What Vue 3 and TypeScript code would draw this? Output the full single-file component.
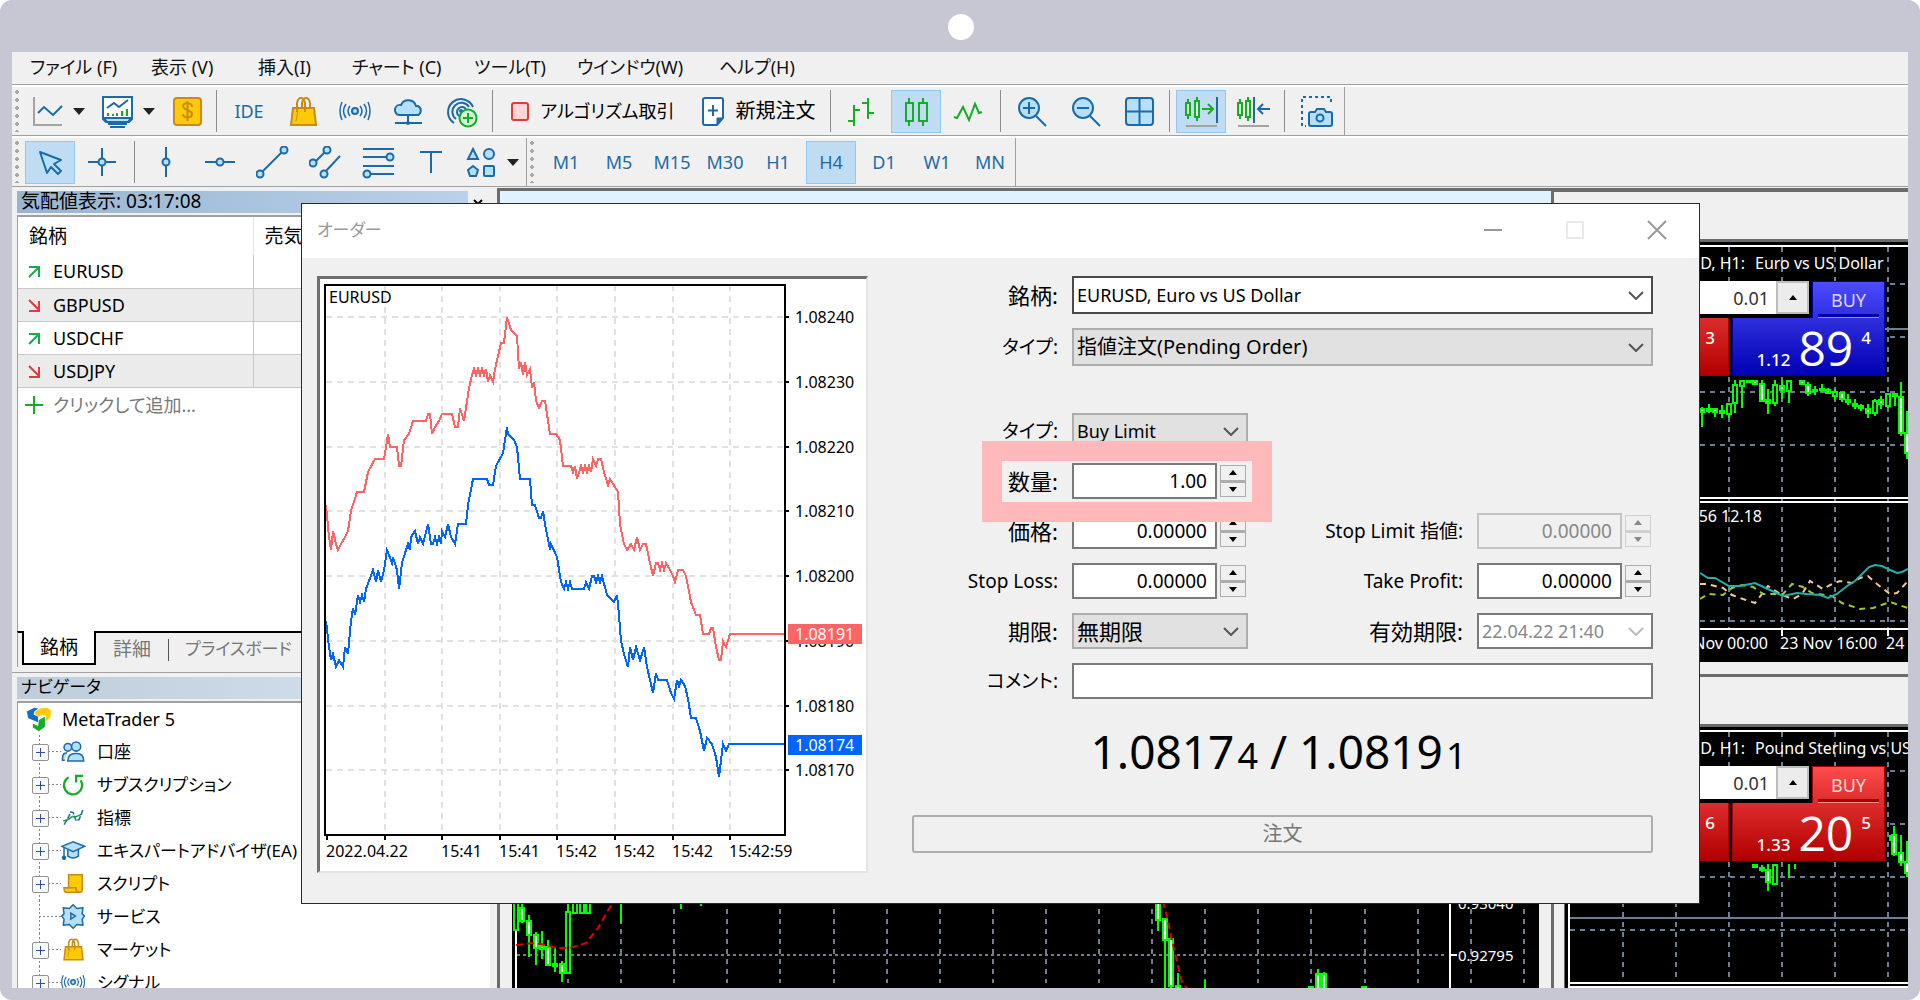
<script setup lang="ts">
import { computed, ref } from 'vue'

type Point = [number, number]
/** x, high, body top, body bottom, low, filled body (1) or hollow (0) */
type Candle = [number, number, number, number, number, number]

interface Tool {
  id: string
  label: string
  icon?: string
  text?: string
  width: number
  iconWidth?: number
  menu?: boolean
  active?: boolean
  sep?: boolean
}

const menus = [
  { label: 'ファイル (F)', width: 121 },
  { label: '表示 (V)', width: 107 },
  { label: '挿入(I)', width: 94 },
  { label: 'チャート (C)', width: 122 },
  { label: 'ツール(T)', width: 103 },
  { label: 'ウインドウ(W)', width: 142 },
  { label: 'ヘルプ(H)', width: 120 },
]

const icons: Record<string, string> = {
  line: '<path d="M3 2V30H31" fill="none" stroke="#a3a3a3" stroke-width="2"/><path d="M7 18l6-6 9 8 9-9" fill="none" stroke="#1c6ba8" stroke-width="2"/>',
  monitor: '<path d="M2 2h29v22l-3 3H5l-3-3z" fill="#fff" stroke="#1c6ba8" stroke-width="2"/><path d="M3 23h27l-3 4H6z" fill="#b5e0fb" stroke="#1c6ba8" stroke-width="2"/><path d="M7 29h19M9 32h15" stroke="#1c6ba8" stroke-width="2"/><path d="M6 13l7-5 5 4 9-7" fill="none" stroke="#1c6ba8" stroke-width="2"/><path d="M7 21v-3M12 21v-2M16 21v-3M21 21v-5M26 21v-7" stroke="#14ad25" stroke-width="2"/>',
  dollar: '<rect x="3" y="3" width="27" height="27" rx="3" fill="#fdca05" stroke="#c98a16" stroke-width="2"/><path d="M21 12c0-5-9-5-9-1s9 4 9 8-9 5-9 0M16.500 6v20" fill="none" stroke="#c98a16" stroke-width="2"/>',
  bag: '<path d="M6 13h21l2 17H4z" fill="#fdca05" stroke="#c98a16" stroke-width="2"/><path d="M10 17V8q1-5 4-5t4 5v9M15 12V8q1-5 4-5t4 5v5" fill="none" stroke="#c98a16" stroke-width="2"/><path d="M9 26l2-10" stroke="#c98a16" stroke-width="1"/>',
  signal: '<circle cx="16" cy="16" r="3" fill="#b5e0fb" stroke="#1c6ba8" stroke-width="2"/><path d="M11 11q-4 5 0 10M7 9q-5 7 0 14M21 11q4 5 0 10M25 9q5 7 0 14M3 7q-4 9 0 18M29 7q4 9 0 18" fill="none" stroke="#1c6ba8" stroke-width="1.500"/>',
  cloud: '<path d="M7 20h19a5 5 0 0 0 0-9h-2a8 8 0 0 0-15-1 5 5 0 0 0-2 10z" fill="#b5e0fb" stroke="#1c6ba8" stroke-width="2"/><path d="M16 20v8M3 28h27" stroke="#1c6ba8" stroke-width="2"/><circle cx="16" cy="28" r="2" fill="#1c6ba8"/>',
  finger: '<path d="M9 28A13 13 0 1 1 28 12M11 24a9 9 0 1 1 13-12M14 21a5 5 0 1 1 7-7" fill="none" stroke="#1c6ba8" stroke-width="2"/><circle cx="16" cy="16" r="2" fill="#1c6ba8"/><circle cx="23" cy="23" r="8.500" fill="#d6f5d6" stroke="#14ad25" stroke-width="2"/><path d="M23 18v10M18 23h10" stroke="#14ad25" stroke-width="2"/>',
  stop: '<rect x="1" y="8" width="16" height="17" rx="2" fill="#ffd6d2" stroke="#df3b3b" stroke-width="2"/>',
  neworder: '<path d="M4 3h16a2 2 0 0 1 2 2v18l-6 7H4a2 2 0 0 1-2-2V5a2 2 0 0 1 2-2z" fill="#fff" stroke="#1c6ba8" stroke-width="2"/><path d="M22 23h-6v7z" fill="#1c6ba8" stroke="#1c6ba8"/><path d="M12 10v11M7 15.500h10" stroke="#1c6ba8" stroke-width="2"/>',
  bars: '<path d="M8 10v21M8 15h6M2 26h6M22 3v21M16 8h6M22 18h6" fill="none" stroke="#14ad25" stroke-width="2"/>',
  candles: '<path d="M9 3v28M23 3v28" stroke="#14ad25" stroke-width="2"/><rect x="6" y="8" width="7" height="18" fill="#c0dcf3" stroke="#14ad25" stroke-width="2"/><rect x="19" y="8" width="8" height="18" fill="#c0dcf3" stroke="#14ad25" stroke-width="2"/>',
  zigzag: '<path d="M2 22l3 1 6-11 6 13 6-16 4 9 3-1" fill="none" stroke="#14ad25" stroke-width="2"/>',
  zoomin: '<circle cx="13" cy="13" r="10" fill="#b5e0fb" stroke="#1c6ba8" stroke-width="2"/><path d="M20 21l10 10M13 7v12M7 13h12" stroke="#1c6ba8" stroke-width="2"/>',
  zoomout: '<circle cx="13" cy="13" r="10" fill="#b5e0fb" stroke="#1c6ba8" stroke-width="2"/><path d="M20 21l10 10M7 13h12" stroke="#1c6ba8" stroke-width="2"/>',
  tiles: '<rect x="3" y="3" width="27" height="27" rx="3" fill="#b5e0fb" stroke="#1c6ba8" stroke-width="2"/><path d="M16.500 3v27M3 16.500h27" stroke="#1c6ba8" stroke-width="2"/>',
  autoscroll: '<path d="M3 4v20M12 2v24" stroke="#14ad25" stroke-width="2"/><rect x="1" y="8" width="4" height="12" fill="#d9f2d5" stroke="#14ad25" stroke-width="2"/><rect x="10" y="6" width="4" height="16" fill="#d9f2d5" stroke="#14ad25" stroke-width="2"/><path d="M17 14h11M23 9l5 5-5 5" fill="none" stroke="#14ad25" stroke-width="2"/><path d="M32 2v26" stroke="#1c6ba8" stroke-width="2"/><path d="M1 31h31" stroke="#a3a3a3" stroke-width="2"/>',
  shift: '<path d="M3 4v20M11 2v24" stroke="#14ad25" stroke-width="2"/><rect x="1" y="8" width="4" height="12" fill="#d9f2d5" stroke="#14ad25" stroke-width="2"/><rect x="9" y="6" width="4" height="16" fill="#d9f2d5" stroke="#14ad25" stroke-width="2"/><path d="M33 14H21M26 9l-5 5 5 5" fill="none" stroke="#1c6ba8" stroke-width="2"/><path d="M17 2v26" stroke="#1c6ba8" stroke-width="2"/><path d="M1 31h31" stroke="#a3a3a3" stroke-width="2"/>',
  camera: '<path d="M31 7V2H2v29h4" fill="none" stroke="#1c6ba8" stroke-width="2" stroke-dasharray="3 3"/><path d="M11 17h4l2-3h7l2 3h4a2 2 0 0 1 2 2v10a2 2 0 0 1-2 2H11a2 2 0 0 1-2-2V19a2 2 0 0 1 2-2z" fill="#b5e0fb" stroke="#1c6ba8" stroke-width="2"/><circle cx="20" cy="23" r="3.500" fill="#b5e0fb" stroke="#1c6ba8" stroke-width="2"/>',
  cursor: '<path d="M6 6l21 8-7 4 7 7-3 3-7-7-4 6z" fill="#b5e0fb" stroke="#1c6ba8" stroke-width="2" stroke-linejoin="round"/>',
  cross: '<path d="M16 2v28M2 16h28" stroke="#1c6ba8" stroke-width="2"/><circle cx="16" cy="16" r="3.500" fill="#b5e0fb" stroke="#1c6ba8" stroke-width="2"/>',
  vline: '<path d="M16 1v30" stroke="#1c6ba8" stroke-width="2"/><circle cx="16" cy="16" r="3.500" fill="#b5e0fb" stroke="#1c6ba8" stroke-width="2"/>',
  hline: '<path d="M1 16h30" stroke="#1c6ba8" stroke-width="2"/><circle cx="16" cy="16" r="3.500" fill="#b5e0fb" stroke="#1c6ba8" stroke-width="2"/>',
  trend: '<path d="M6 26L26 6" stroke="#1c6ba8" stroke-width="2"/><circle cx="28" cy="4" r="3.500" fill="#b5e0fb" stroke="#1c6ba8" stroke-width="2"/><circle cx="4" cy="28" r="3.500" fill="#b5e0fb" stroke="#1c6ba8" stroke-width="2"/>',
  channel: '<path d="M6 16L17 5M16 26L31 10" stroke="#1c6ba8" stroke-width="2"/><circle cx="18" cy="4" r="3.500" fill="#b5e0fb" stroke="#1c6ba8" stroke-width="2"/><circle cx="4" cy="17" r="3.500" fill="#b5e0fb" stroke="#1c6ba8" stroke-width="2"/><circle cx="15" cy="28" r="3.500" fill="#b5e0fb" stroke="#1c6ba8" stroke-width="2"/>',
  fibo: '<path d="M1 3h31M1 11h24M1 20h31M8 28h24" stroke="#1c6ba8" stroke-width="2"/><circle cx="28" cy="11" r="3.500" fill="#b5e0fb" stroke="#1c6ba8" stroke-width="2"/><circle cx="5" cy="28" r="3.500" fill="#b5e0fb" stroke="#1c6ba8" stroke-width="2"/>',
  texttool: '<path d="M5 6h22M16 6v21" stroke="#1c6ba8" stroke-width="2"/>',
  shapes: '<path d="M8 3l5 10H3z" fill="#b5e0fb" stroke="#1c6ba8" stroke-width="2"/><circle cx="24" cy="8" r="5" fill="#b5e0fb" stroke="#1c6ba8" stroke-width="2"/><path d="M8 20l5 4-2 6H5l-2-6z" fill="#b5e0fb" stroke="#1c6ba8" stroke-width="2"/><rect x="19" y="20" width="10" height="10" rx="1" fill="#b5e0fb" stroke="#1c6ba8" stroke-width="2"/>',
  people: '<circle cx="9" cy="11" r="5" fill="#b5e0fb" stroke="#1c6ba8" stroke-width="2"/><path d="M5 28H2v-3q0-7 6-7" fill="#b5e0fb" stroke="#1c6ba8" stroke-width="2"/><circle cx="20" cy="10" r="6" fill="#b5e0fb" stroke="#1c6ba8" stroke-width="2"/><path d="M9 29q0-10 10-10h2q9 0 9 10z" fill="#b5e0fb" stroke="#1c6ba8" stroke-width="2"/>',
  refresh: '<path d="M10 7A12 12 0 1 0 26 11M20 14V5h9" fill="none" stroke="#14ad25" stroke-width="3"/>',
  indicator: '<path d="M3 21l7-2 5-4 3 1 10-4" fill="none" stroke="#14ad25" stroke-width="2"/><path d="M4 26l5-8 4-9 3 1 4 11 4-2 5-13" fill="none" stroke="#1c6ba8" stroke-width="2" stroke-dasharray="7 2"/>',
  cap: '<path d="M9 15v9q7 5 14 0v-9" fill="#b5e0fb" stroke="#1c6ba8" stroke-width="2"/><path d="M1 11l15-6 15 6-15 7z" fill="#b5e0fb" stroke="#1c6ba8" stroke-width="2"/><path d="M4 13v11" stroke="#1c6ba8" stroke-width="2"/><circle cx="4" cy="26" r="3" fill="#1c6ba8"/>',
  script: '<path d="M10 5h18v20q0 3-3 3H6q-2-1-2-6h6z" fill="#fdca05" stroke="#c98a16" stroke-width="2"/><path d="M5 22h15v3q1 3 4 3" fill="none" stroke="#c98a16" stroke-width="2"/>',
  gear: '<path d="M16 1l5 5 8-1-1 8 3 3-3 4 1 8-8-1-5 5-5-5-8 1 1-8-3-4 3-3-1-8 8 1z" fill="#b5e0fb" stroke="#1c6ba8" stroke-width="2" stroke-linejoin="round"/><path d="M13 12l6 4-6 4z" fill="#b5e0fb" stroke="#1c6ba8" stroke-width="2"/>',
  logo: '<path d="M1 6l10-5 5 1-5 4-1 4 6 3v7L3 15z" fill="#0f6fc6"/><path d="M11 8l7-6 10-1 5 4-1 9-5 5-1-7-4-2-6 3z" fill="#fdca05"/><path d="M17 17l8-4v13l-8 6-8-5v-5l7 3z" fill="#14ad25"/>',
}

const mainTools: Tool[] = [
  { id: 'line', label: 'ラインチャート', icon: 'line', width: 72, menu: true },
  { id: 'monitor', label: '表示形式', icon: 'monitor', width: 68, menu: true },
  { id: 'dollar', label: '銘柄', icon: 'dollar', width: 50 },
  { id: 's1', label: '', width: 8, sep: true },
  { id: 'ide', label: 'IDE', text: 'IDE', width: 58 },
  { id: 'bag', label: 'マーケット', icon: 'bag', width: 50 },
  { id: 'signal', label: 'シグナル', icon: 'signal', width: 54 },
  { id: 'cloud', label: 'クラウド', icon: 'cloud', width: 53 },
  { id: 'finger', label: 'サブスクリプション', icon: 'finger', width: 53 },
  { id: 's2', label: '', width: 8, sep: true },
  { id: 'algo', label: 'アルゴリズム取引', icon: 'stop', iconWidth: 18, text: 'アルゴリズム取引', width: 194 },
  { id: 'new', label: '新規注文', icon: 'neworder', iconWidth: 24, text: '新規注文', width: 136 },
  { id: 's3', label: '', width: 8, sep: true },
  { id: 'bars', label: 'バーチャート', icon: 'bars', width: 57 },
  { id: 'candles', label: 'ローソク足', icon: 'candles', width: 50, active: true },
  { id: 'zigzag', label: 'ライン', icon: 'zigzag', width: 55 },
  { id: 's4', label: '', width: 8, sep: true },
  { id: 'zoomin', label: '拡大', icon: 'zoomin', width: 56 },
  { id: 'zoomout', label: '縮小', icon: 'zoomout', width: 53 },
  { id: 'tiles', label: '整列', icon: 'tiles', width: 52 },
  { id: 's5', label: '', width: 11, sep: true },
  { id: 'autoscroll', label: '自動スクロール', icon: 'autoscroll', width: 50, active: true },
  { id: 'shift', label: 'チャートシフト', icon: 'shift', width: 54 },
  { id: 's6', label: '', width: 8, sep: true },
  { id: 'camera', label: 'スクリーンショット', icon: 'camera', width: 56 },
]

const drawTools: Tool[] = [
  { id: 'cursor', label: 'カーソル', icon: 'cursor', width: 50, active: true },
  { id: 'cross', label: '十字線', icon: 'cross', width: 55 },
  { id: 'd1', label: '', width: 8, sep: true },
  { id: 'vline', label: '垂直線', icon: 'vline', width: 56 },
  { id: 'hline', label: '水平線', icon: 'hline', width: 52 },
  { id: 'trend', label: 'トレンドライン', icon: 'trend', width: 53 },
  { id: 'channel', label: 'チャネル', icon: 'channel', width: 53 },
  { id: 'fibo', label: 'フィボナッチ', icon: 'fibo', width: 53 },
  { id: 'texttool', label: 'テキスト', icon: 'texttool', width: 53 },
  { id: 'shapes', label: '図形', icon: 'shapes', width: 68, menu: true },
]

const periods = ['M1', 'M5', 'M15', 'M30', 'H1', 'H4', 'D1', 'W1', 'MN']
const period = ref('H4')

const symbols = [
  { name: 'EURUSD', up: true },
  { name: 'GBPUSD', up: false },
  { name: 'USDCHF', up: true },
  { name: 'USDJPY', up: false },
]

const tree = [
  { name: '口座', icon: 'people', open: true },
  { name: 'サブスクリプション', icon: 'refresh', open: true },
  { name: '指標', icon: 'indicator', open: true },
  { name: 'エキスパートアドバイザ(EA)', icon: 'cap', open: true },
  { name: 'スクリプト', icon: 'script', open: true },
  { name: 'サービス', icon: 'gear', open: false },
  { name: 'マーケット', icon: 'bag', open: true },
  { name: 'シグナル', icon: 'signal', open: true },
]

/* Tick chart: price in points above 1.08000 against horizontal position */
const PLOT_TOP = 34
const PER_POINT = 6.475
const priceY = (p: number) => Math.round(PLOT_TOP + (240 - p) * PER_POINT)
/* A run of alternating ticks between two price levels */
const chop = (from: number, to: number, a: number, b: number): Point[] => {
  const out: Point[] = []
  let hi = true
  for (let x = from; x <= to; x += 2) {
    out.push([x, hi ? a : b])
    hi = !hi
  }
  return out
}
const ask: Point[] = [
  [1, 211], [4, 206], [6, 204], [8, 207], [11, 205], [13, 204], [16, 205], [20, 206], [23, 207], [26, 210], [32, 213], [39, 213],
  [43, 216], [50, 218], [59, 218], [61, 220], [63, 222], [65, 220], [72, 220], [74, 217], [76, 217], [79, 221], [84, 222], [88, 224],
  [101, 224], [103, 225], [105, 225], [107, 222], [110, 223], [114, 224], [117, 225], [127, 225], [130, 223], [133, 223], [135, 226],
  [139, 224], [141, 226], [144, 229], [147, 231], ...chop(149, 161, 232, 231), [163, 230], [165, 231], [168, 230], [170, 232], [173, 234], [176, 236],
  [179, 236], [182, 240], [186, 238], [192, 237], [194, 232], [196, 233], [198, 231], [200, 233], [202, 231], [205, 232], [207, 229],
  [209, 230], [211, 227], [214, 226], [217, 227], [220, 227], [222, 225], [225, 222], [231, 222], [235, 221], [238, 217], [246, 217],
  [248, 216], [250, 217], [252, 215], ...chop(256, 266, 217, 216), [268, 218], [271, 217], [273, 218], [276, 218], [279, 216], [283, 214], [285, 215],
  [293, 213], [295, 208], [299, 205], [302, 204], [306, 205], [309, 204], [312, 206], [315, 204], [318, 205], [321, 205], [325, 202],
  [328, 200], [331, 202], ...chop(333, 341, 202, 201), [345, 201], [348, 200], [350, 199], [353, 201], [358, 201], [361, 200], [366, 196],
  [371, 194], [375, 194], [378, 191], [384, 191], [386, 192], [388, 192], [391, 189], [394, 187], [396, 187], [398, 190], [401, 189], [405, 191], [461, 191],
]
const bid: Point[] = [
  [1, 193], [4, 189], [6, 187], [8, 188], [11, 186], [14, 187], [18, 186], [20, 189], [23, 188], [26, 193], [28, 195], [30, 194],
  [33, 197], [35, 196], [37, 197], [39, 196], [41, 198], [48, 201], [51, 199], [53, 201], [56, 199], [59, 201], [62, 204], [67, 202],
  [68, 203], [72, 201], [74, 198], [77, 202], [81, 204], [83, 205], [85, 204], [86, 206], [90, 207], [93, 205], [95, 206], [98, 205],
  [103, 208], [106, 205], ...chop(108, 116, 205, 206), [117, 207], [120, 206], [123, 208], [126, 206], [130, 205], [133, 208], [141, 208],
  [143, 211], [148, 215], [162, 215], [164, 214], [168, 214], [171, 217], [178, 219], [182, 223], [183, 222], [189, 221], [192, 220],
  [195, 215], [205, 215], [207, 211], [210, 211], [214, 209], [216, 209], [218, 210], [220, 208], [224, 205], [225, 204], [226, 205], [232, 203],
  [236, 199], [239, 198], [241, 199], [243, 198], [245, 199], [247, 198], [259, 198], [261, 199], [264, 198], [267, 200],
  ...chop(269, 276, 200, 199), [277, 200], [282, 197], [289, 196], [292, 197], [294, 194], [296, 190], [299, 188], [303, 186], [305, 189],
  [308, 187], [311, 189], [315, 187], [317, 188], [319, 189], [322, 186], [325, 184], [328, 182], [331, 185], [333, 184], [342, 184], [346, 182],
  [349, 181], [352, 184], [354, 183], [356, 184], [360, 183], [363, 181], [366, 178], [371, 178], [375, 176], [379, 173], [382, 175],
  [387, 174], [391, 172], [394, 169], [398, 174], [401, 173], [404, 174], [461, 174],
]
const toLine = (pts: Point[]) => pts.map(([x, p]) => `${x + 7},${priceY(p)}`).join(' ')
const askLine = computed(() => toLine(ask))
const bidLine = computed(() => toLine(bid))
const priceLevels = [240, 230, 220, 210, 200, 190, 180, 170]
const timeGrid = [0, 1, 2, 3, 4, 5, 6, 7].map((i) => 9 + Math.round(i * 57.6))
const timeLabels = [
  { slot: 0, text: '2022.04.22' },
  { slot: 2, text: '15:41' },
  { slot: 3, text: '15:41' },
  { slot: 4, text: '15:42' },
  { slot: 5, text: '15:42' },
  { slot: 6, text: '15:42' },
  { slot: 7, text: '15:42:59' },
]

const mainGrid = Array.from({ length: 19 }, (_, i) => 56 + Math.round(i * 53.1))
const mainCandles: Candle[] = [
  [4, 697, 697, 727, 727, 0], [10, 700, 705, 718, 720, 1], [17, 712, 718, 732, 754, 1], [24, 729, 732, 745, 762, 1], [30, 728, 743, 746, 756, 1],
  [36, 737, 744, 762, 763, 1], [43, 745, 761, 763, 769, 1], [50, 758, 761, 770, 779, 1], [56, 697, 709, 770, 771, 0],
  [63, 697, 697, 710, 711, 0], [70, 697, 697, 710, 711, 0], [76, 697, 697, 710, 710, 0], [109, 697, 697, 697, 720, 1], [169, 697, 697, 697, 706, 1], [189, 697, 697, 697, 703, 1],
  [646, 697, 697, 717, 728, 1], [653, 715, 716, 737, 790, 1], [659, 734, 736, 783, 790, 1], [666, 770, 783, 790, 790, 1],
  [693, 777, 790, 790, 790, 1], [799, 784, 784, 790, 790, 1], [806, 766, 771, 790, 790, 1], [812, 769, 771, 790, 790, 1], [852, 784, 784, 790, 790, 1],
]

const minorGrid = [58, 111, 164, 217, 270, 323]
const pairs = [
  {
    key: 'eur',
    symbol: 'EURUSD, H1:',
    title: 'Euro vs US Dollar',
    tone: 'blue',
    levels: [42, 95, 150, 203],
    solid: 87,
    sell: '3',
    whole: '1.12',
    big: '89',
    frac: '4',
    candles: [
      [137, 165, 167, 170, 185, 1], [144, 162, 167, 169, 171, 1], [150, 166, 167, 170, 175, 1], [157, 163, 169, 171, 176, 1], [164, 161, 162, 172, 176, 0],
      [170, 138, 143, 161, 171, 0], [177, 138, 139, 144, 166, 0], [184, 138, 139, 140, 140, 1], [190, 138, 139, 142, 143, 1], [197, 138, 142, 159, 160, 1], [203, 147, 158, 161, 172, 1],
      [210, 138, 143, 161, 164, 0], [217, 138, 144, 148, 157, 1], [224, 138, 139, 149, 161, 0], [237, 138, 139, 142, 143, 1], [243, 140, 143, 151, 154, 1],
      [250, 144, 148, 149, 153, 1], [257, 142, 147, 148, 150, 1], [263, 146, 148, 151, 152, 1], [270, 147, 150, 154, 158, 0], [277, 150, 151, 157, 160, 1],
      [283, 152, 158, 160, 163, 1], [290, 157, 162, 164, 167, 1], [296, 162, 164, 166, 169, 1], [303, 162, 167, 171, 176, 1], [310, 157, 159, 171, 174, 0],
      [316, 154, 158, 162, 167, 1], [323, 151, 152, 164, 166, 0], [330, 151, 152, 154, 164, 1], [336, 140, 155, 191, 194, 1], [342, 169, 191, 211, 217, 1],
    ] as Candle[],
  },
  {
    key: 'gbp',
    symbol: 'GBPUSD, H1:',
    title: 'Pound Sterling vs US',
    tone: 'red',
    levels: [44, 97, 150, 203],
    solid: 191,
    sell: '6',
    whole: '1.33',
    big: '20',
    frac: '5',
    candles: [
      [190, 137, 138, 140, 140, 1], [197, 138, 141, 143, 145, 1], [203, 137, 143, 155, 164, 1], [210, 137, 138, 157, 157, 0], [224, 137, 137, 137, 151, 1],
      [230, 137, 137, 137, 142, 1], [325, 108, 108, 108, 114, 1], [329, 99, 108, 127, 129, 1], [336, 108, 126, 135, 139, 1], [342, 114, 135, 146, 150, 1],
    ] as Candle[],
  },
]

const adxLine = '135,331 143,336 150,336 164,344 175,344 190,341 203,347 218,354 232,351 242,352 255,353 263,356 272,352 282,344 290,339 298,331 304,325 310,323 317,324 323,327 332,331 337,330 343,327'
const plusDi = '135,342 142,342 150,344 158,346 167,353 178,357 190,361 197,352 203,344 217,353 228,357 237,352 245,339 258,347 267,342 275,339 287,341 295,336 303,334 312,342 325,352 332,351 343,339'
const minusDi = '135,357 143,352 158,353 167,346 177,343 188,345 198,352 208,352 218,352 227,342 238,345 247,351 267,354 277,361 295,367 308,366 325,360 343,366'

const symbol = ref('eurusd')
const orderType = ref('pending')
const pendingType = ref('buylimit')
const expiry = ref('gtc')
const expiryDate = ref('date')
const volume = ref('1.00')
const price = ref('0.00000')
const stopLimit = ref('0.00000')
const stopLoss = ref('0.00000')
const takeProfit = ref('0.00000')
const comment = ref('')
</script>

<template>
  <div class="frame">
    <span class="lens"></span>
    <div class="app">
      <nav class="menubar">
        <button v-for="m in menus" :key="m.label" type="button" class="menu" :style="{ flexBasis: m.width + 'px' }">{{ m.label }}</button>
      </nav>

      <div class="toolbar">
        <div class="tools">
          <span class="grip"></span>
          <template v-for="t in mainTools" :key="t.id">
            <span v-if="t.sep" class="sep" :style="{ width: t.width + 'px' }"></span>
            <button v-else type="button" class="tool" :class="[t.id, { active: t.active, labelled: t.icon && t.text }]" :aria-label="t.label" :style="{ width: t.width + 'px' }">
              <svg v-if="t.icon" :width="t.iconWidth ?? 33" height="33" v-html="icons[t.icon]"></svg>
              <span v-if="t.text">{{ t.text }}</span>
              <span v-if="t.menu" class="caret"></span>
            </button>
          </template>
        </div>
      </div>

      <div class="toolbar">
        <div class="tools draw">
          <span class="grip"></span>
          <template v-for="t in drawTools" :key="t.id">
            <span v-if="t.sep" class="sep" :style="{ width: t.width + 'px' }"></span>
            <button v-else type="button" class="tool" :class="{ active: t.active }" :aria-label="t.label" :style="{ width: t.width + 'px' }">
              <svg width="33" height="33" v-html="icons[t.icon ?? '']"></svg>
              <span v-if="t.menu" class="caret"></span>
            </button>
          </template>
        </div>
        <div class="tools periods">
          <span class="grip"></span>
          <button v-for="p in periods" :key="p" type="button" class="tool" :class="{ active: p === period }" @click="period = p">{{ p }}</button>
        </div>
      </div>

      <div class="workspace">
        <aside class="dock">
          <section class="market">
            <header class="dock-head">
              <h2 class="dock-title current">気配値表示: 03:17:08</h2>
              <button type="button" class="dock-close" aria-label="閉じる">
                <svg width="10" height="10"><path d="M1 1l8 8M9 1L1 9" stroke="#000" stroke-width="2" /></svg>
              </button>
            </header>
            <div class="dock-body">
              <table class="quotes">
                <thead>
                  <tr><th class="sym">銘柄</th><th>売気配値</th></tr>
                </thead>
                <tbody>
                  <tr v-for="s in symbols" :key="s.name">
                    <td>
                      <svg width="12" height="13" fill="none" stroke-width="2">
                        <path v-if="s.up" d="M1 12L11 2M1 2h10v10" stroke="#14ad4a" />
                        <path v-else d="M1 1l10 10M1 12h10V2" stroke="#dd3b3f" />
                      </svg>{{ s.name }}
                    </td>
                    <td></td>
                  </tr>
                </tbody>
              </table>
              <button type="button" class="add">
                <svg width="18" height="18"><path d="M9 0v18M0 9h18" stroke="#14ad25" stroke-width="2" /></svg>クリックして追加...
              </button>
            </div>
            <div class="tabs">
              <button type="button" class="tab on">銘柄</button>
              <button type="button" class="tab">詳細</button>
              <button type="button" class="tab split">プライスボード</button>
            </div>
          </section>

          <section class="navigator">
            <header class="dock-head">
              <h2 class="dock-title">ナビゲータ</h2>
            </header>
            <div class="dock-body tree">
              <div class="root"><svg width="25" height="25" viewBox="0 0 33 33" v-html="icons.logo"></svg>MetaTrader 5</div>
              <ul>
                <li v-for="n in tree" :key="n.name">
                  <span class="twig" :class="{ open: n.open }"></span>
                  <svg width="25" height="25" viewBox="0 0 33 33" v-html="icons[n.icon]"></svg>
                  <span>{{ n.name }}</span>
                </li>
              </ul>
            </div>
          </section>
        </aside>

        <main class="center">
          <div class="center-head"></div>
          <svg class="canvas">
            <path d="M4 0V900M938 0V900M938 752h7" stroke="#fff" stroke-width="2" fill="none" />
            <path d="M5 752H933" class="grid tight" />
            <path v-for="x in mainGrid" :key="x" :d="`M${x} 686V780`" class="grid" />
            <g v-for="c in mainCandles" :key="c[0]" class="candle">
              <path :d="`M${c[0]} ${c[1]}V${c[4]}`" />
              <rect :x="c[0] - 2" :y="c[2]" width="4" :height="c[3] - c[2]" :class="{ filled: c[5] }" />
            </g>
            <polyline class="ma" points="4,742 20,740 34,742 44,745 58,745 74,740 86,725 95,709 102,698" />
            <polyline class="ma" points="651,698 655,714 659,733 665,759 670,779 676,787" />
            <text x="946" y="706">0.93040</text>
            <text x="946" y="758">0.92795</text>
          </svg>
        </main>

        <section class="side">
          <article v-for="p in pairs" :key="p.key" class="pair" :class="p.key">
            <div class="pair-head"></div>
            <div class="pair-body">
              <svg class="canvas">
                <path v-for="x in minorGrid" :key="x" :d="`M${x} 5V${p.key === 'eur' ? 387 : 256}`" class="grid" />
                <path v-for="y in p.levels" :key="y" :d="`M5 ${y}H420`" class="grid" />
                <path v-if="p.key === 'eur'" d="M5 379H420" class="grid" />
                <path :d="`M5 ${p.solid}H420`" stroke="#6f7f93" stroke-width="2" />
                <path d="M4 420V4H420M4 256H420M4 260H420" stroke="#fff" fill="none" stroke-width="2" />
                <g v-for="c in p.candles" :key="c[0]" class="candle">
                  <path :d="`M${c[0]} ${c[1]}V${c[4]}`" />
                  <rect :x="c[0] - 2" :y="c[2]" width="4" :height="c[3] - c[2]" :class="{ filled: c[5] }" />
                </g>
                <text x="180" y="27" text-anchor="end">{{ p.symbol }}</text>
                <text x="190" y="27">{{ p.title }}</text>
                <template v-if="p.key === 'eur'">
                  <polyline :points="plusDi" stroke="#f5c79a" class="dash" />
                  <polyline :points="minusDi" stroke="#9bcb2f" class="dash" />
                  <polyline :points="adxLine" stroke="#22b0ad" fill="none" stroke-width="2" />
                  <path d="M4 387H420M217 387v7M323 387v7" stroke="#fff" stroke-width="2" />
                  <text x="197" y="280" text-anchor="end">23.56 12.18</text>
                  <text x="203" y="407" text-anchor="end">22 Nov 00:00</text>
                  <text x="215" y="407">23 Nov 16:00</text>
                  <text x="321" y="407">24</text>
                </template>
              </svg>
              <div class="oneclick">
                <button type="button" class="side-tab red">SELL</button>
                <div class="lot">
                  <input :id="'lot-' + p.key" type="text" value="0.01" aria-label="ロット" />
                  <button type="button" aria-label="増やす"><span class="up"></span></button>
                </div>
                <button type="button" class="side-tab" :class="p.tone">BUY</button>
                <button type="button" class="deal red" aria-label="売り"><sup>{{ p.sell }}</sup></button>
                <button type="button" class="deal" :class="p.tone"><small>{{ p.whole }}</small><b>{{ p.big }}</b><sup>{{ p.frac }}</sup></button>
              </div>
            </div>
          </article>
        </section>
      </div>
    </div>

    <div class="dialog" role="dialog" aria-labelledby="order-title">
      <header class="dialog-head">
        <h1 id="order-title">オーダー</h1>
        <button type="button" aria-label="最小化"><svg width="20" height="20"><path d="M1 10h18" stroke="#999" stroke-width="2" /></svg></button>
        <button type="button" aria-label="最大化" disabled><svg width="20" height="20"><rect x="2" y="2" width="16" height="16" fill="none" stroke="#e9e9e9" stroke-width="2" /></svg></button>
        <button type="button" aria-label="閉じる"><svg width="20" height="20"><path d="M1 1l18 18M19 1L1 19" stroke="#999" stroke-width="2" /></svg></button>
      </header>

      <div class="dialog-body">
        <div class="ticks">
          <svg class="tick-chart">
            <path v-for="p in priceLevels" :key="p" :d="`M8 ${priceY(p)}H465`" class="faint" />
            <path v-for="x in timeGrid.slice(1)" :key="x" :d="`M${x} 2V551`" class="faint" />
            <polyline :points="askLine" stroke="#ff6464" class="price" />
            <polyline :points="bidLine" stroke="#0064ff" class="price" />
            <path d="M7 2V552H467V2z" fill="none" stroke="#000" stroke-width="2" />
            <path v-for="p in priceLevels" :key="'t' + p" :d="`M467 ${priceY(p)}h4`" stroke="#000" stroke-width="2" />
            <path v-for="x in timeGrid" :key="'x' + x" :d="`M${x} 552v5`" stroke="#000" stroke-width="2" />
            <text x="11" y="20">EURUSD</text>
            <text v-for="p in priceLevels" :key="'p' + p" x="477" :y="priceY(p) + 6">1.08{{ p }}</text>
            <rect x="470" y="341" width="74" height="20" fill="#ff6464" />
            <text x="477" y="357" fill="#fff">1.08191</text>
            <rect x="470" y="452" width="74" height="20" fill="#0064ff" />
            <text x="477" y="468" fill="#fff">1.08174</text>
            <text v-for="t in timeLabels" :key="t.slot" :x="timeGrid[t.slot] - 1" y="574">{{ t.text }}</text>
          </svg>
        </div>

        <form class="order" @submit.prevent>
          <div class="row tall">
            <label class="jp" for="symbol">銘柄:</label>
            <div class="select wide white">
              <select id="symbol" v-model="symbol"><option value="eurusd">EURUSD, Euro vs US Dollar</option></select>
              <svg width="16" height="9"><path d="M1 1l7 7 7-7" /></svg>
            </div>
          </div>
          <div class="row tall">
            <label for="type">タイプ:</label>
            <div class="select wide">
              <select id="type" v-model="orderType" class="mixed"><option value="pending">指値注文(Pending Order)</option></select>
              <svg width="16" height="9"><path d="M1 1l7 7 7-7" /></svg>
            </div>
          </div>
          <div class="row apart">
            <label for="pending">タイプ:</label>
            <div class="select">
              <select id="pending" v-model="pendingType"><option value="buylimit">Buy Limit</option></select>
              <svg width="16" height="9"><path d="M1 1l7 7 7-7" /></svg>
            </div>
          </div>
          <div class="row marked">
            <label class="jp" for="volume">数量:</label>
            <div class="spin">
              <input id="volume" v-model="volume" type="text" />
              <span><button type="button" aria-label="増やす"><i class="up"></i></button><button type="button" aria-label="減らす"><i class="down"></i></button></span>
            </div>
            <span class="highlight"></span>
          </div>
          <div class="row">
            <label class="jp" for="price">価格:</label>
            <div class="spin">
              <input id="price" v-model="price" type="text" />
              <span><button type="button" aria-label="増やす"><i class="up"></i></button><button type="button" aria-label="減らす"><i class="down"></i></button></span>
            </div>
            <label class="second" for="stoplimit">Stop Limit 指値:</label>
            <div class="spin off">
              <input id="stoplimit" v-model="stopLimit" type="text" disabled />
              <span><button type="button" aria-label="増やす" disabled><i class="up"></i></button><button type="button" aria-label="減らす" disabled><i class="down"></i></button></span>
            </div>
          </div>
          <div class="row">
            <label for="stoploss">Stop Loss:</label>
            <div class="spin">
              <input id="stoploss" v-model="stopLoss" type="text" />
              <span><button type="button" aria-label="増やす"><i class="up"></i></button><button type="button" aria-label="減らす"><i class="down"></i></button></span>
            </div>
            <label class="second" for="takeprofit">Take Profit:</label>
            <div class="spin">
              <input id="takeprofit" v-model="takeProfit" type="text" />
              <span><button type="button" aria-label="増やす"><i class="up"></i></button><button type="button" aria-label="減らす"><i class="down"></i></button></span>
            </div>
          </div>
          <div class="row">
            <label class="jp" for="expiry">期限:</label>
            <div class="select">
              <select id="expiry" v-model="expiry" class="jp"><option value="gtc">無期限</option></select>
              <svg width="16" height="9"><path d="M1 1l7 7 7-7" /></svg>
            </div>
            <label class="second jp" for="expirydate">有効期限:</label>
            <div class="select white dim">
              <select id="expirydate" v-model="expiryDate" disabled><option value="date">22.04.22 21:40</option></select>
              <svg width="16" height="9"><path d="M1 1l7 7 7-7" /></svg>
            </div>
          </div>
          <div class="row">
            <label for="comment">コメント:</label>
            <input id="comment" v-model="comment" class="comment" type="text" />
          </div>
          <p class="quote">1.0817<small>4</small> / 1.0819<small>1</small></p>
          <button type="submit" class="submit" disabled>注文</button>
        </form>
      </div>
    </div>
  </div>
</template>

<style>
body {
  margin: 0;
  background: #fff;
}
</style>

<style scoped>
* {
  box-sizing: border-box;
}
.frame {
  position: relative;
  display: flex;
  height: 100vh;
  padding: 52px 12px 12px;
  overflow: hidden;
  background: #c7c6d3;
  border-radius: 12px;
  color: #000;
  font-family: 'Noto Sans', 'Noto Sans CJK JP', sans-serif;
  font-size: 18px;
  font-feature-settings: 'palt';
  line-height: 24px;
}
.lens {
  position: absolute;
  top: 14px;
  left: 50%;
  width: 26px;
  height: 26px;
  margin-left: -12px;
  border-radius: 50%;
  background: #fff;
}
button,
input,
select {
  margin: 0;
  padding: 0;
  border: 0;
  border-radius: 0;
  background: none;
  color: inherit;
  font: inherit;
  font-feature-settings: inherit;
  line-height: inherit;
}
h1,
h2,
p,
ul {
  margin: 0;
  padding: 0;
  font-size: inherit;
  font-weight: 400;
  list-style: none;
}
.app {
  display: flex;
  flex: 1;
  flex-direction: column;
  min-width: 0;
  overflow: hidden;
  background: #f0f0f0;
}

/* Menu and toolbars */
.menubar {
  display: flex;
  flex: 0 0 33px;
  padding-left: 18px;
  border-bottom: 1px solid #a0a0a0;
}
.menu {
  padding-bottom: 3px;
  color: #111;
  text-align: left;
  white-space: nowrap;
}
.toolbar {
  display: flex;
  flex: 0 0 51px;
  border-top: 2px solid #fff;
  border-bottom: 1px solid #a0a0a0;
}
.tools {
  display: flex;
  align-items: center;
  border-right: 1px solid #a0a0a0;
  white-space: nowrap;
}
.grip {
  width: 4px;
  height: 42px;
  margin: 0 3px;
  background: radial-gradient(circle at 2px 2px, #a8a8a8 2px, transparent 2px) 0 0 / 4px 8px;
}
.draw .grip {
  margin-right: 6px;
}
.sep {
  height: 42px;
  background: linear-gradient(#8c8c8c, #8c8c8c) 4px 0 / 1px 100% no-repeat;
}
.tool {
  display: flex;
  flex: none;
  align-items: center;
  justify-content: center;
  height: 43px;
  gap: 9px;
  color: #1c6ba8;
}
.tool.labelled {
  gap: 11px;
  color: #000;
}
.tool.new {
  font-size: 20px;
}
.tool.active {
  background: #c0dcf3;
  border: 1px solid #90c8f6;
}
.periods {
  gap: 3px;
}
.periods .grip {
  margin-right: 4px;
}
.periods .tool {
  width: 50px;
}
.caret {
  border: 6px solid transparent;
  border-top: 7px solid #222;
  border-bottom: 0;
}

/* Docked panels */
.workspace {
  display: flex;
  flex: 1;
  min-height: 0;
  margin-top: 1px;
}
.dock {
  display: flex;
  flex: 0 0 485px;
  flex-direction: column;
  padding: 3px 7px 0 5px;
  background: #f0f0f0;
}
.market {
  display: flex;
  flex: 0 0 476px;
  flex-direction: column;
}
.dock-head {
  display: flex;
  flex: 0 0 22px;
  margin-bottom: 2px;
}
.dock-title {
  flex: 1;
  padding-left: 4px;
  background: linear-gradient(90deg, #bfcddb, #d7e4f2);
  font-size: 17px;
  line-height: 20px;
}
.dock-title.current {
  background: linear-gradient(90deg, #99b4d1, #b9d1ea);
  font-size: 19px;
}
.dock-close {
  width: 22px;
  padding-right: 2px;
  line-height: 12px;
}
.dock-body {
  flex: 1;
  min-height: 0;
  overflow: hidden;
  border-top: 2px solid #a0a0a0;
  border-left: 1px solid #a0a0a0;
  background: #fff;
}
.quotes {
  width: 100%;
  table-layout: fixed;
  border-collapse: collapse;
}
.quotes th {
  height: 38px;
  padding: 0 0 0 11px;
  border-left: 1px solid #e3e3e3;
  font-size: 19px;
  font-weight: 400;
  text-align: left;
}
.quotes .sym {
  width: 235px;
  border-left: 0;
}
.quotes td {
  height: 33px;
  padding: 0 10px;
  border-bottom: 1px solid #c8c8c8;
}
.quotes td + td {
  border-left: 1px solid #c8c8c8;
}
.quotes tbody tr:nth-child(even) {
  background: #ebebeb;
}
.quotes svg {
  margin-right: 13px;
}
.add {
  display: flex;
  align-items: center;
  gap: 10px;
  height: 34px;
  padding-left: 7px;
  color: #777;
}
.tabs {
  display: flex;
  flex: 0 0 36px;
  padding-left: 4px;
  border-top: 2px solid #000;
  border-left: 1px solid #a0a0a0;
  color: #777;
}
.tab {
  position: relative;
  height: 31px;
  padding: 0 17px;
  font-size: 19px;
}
.tab.on {
  margin-top: -2px;
  height: 34px;
  padding: 0 16px;
  border: 2px solid #000;
  border-top: 0;
  background: #fff;
  color: #000;
}
.tab.split {
  font-size: 17px;
}
.tab.split::before {
  position: absolute;
  top: 6px;
  left: 0;
  height: 22px;
  border-left: 1px solid #555;
  content: '';
}
.navigator {
  display: flex;
  flex: 1;
  flex-direction: column;
  min-height: 0;
  margin: 5px -7px 0 -5px;
  padding: 4px 7px 0 5px;
  border-top: 1px solid #a0a0a0;
}
.root {
  display: flex;
  align-items: center;
  gap: 11px;
  height: 32px;
  padding-left: 8px;
}
.tree li {
  display: flex;
  align-items: center;
  height: 33px;
  padding-left: 14px;
  background: linear-gradient(#888 50%, transparent 50%) 21px 0 / 1px 4px repeat-y;
  font-size: 17px;
  white-space: nowrap;
}
.tree li svg {
  margin-right: 11px;
}
.twig {
  position: relative;
  width: 29px;
  height: 15px;
  background: linear-gradient(90deg, #888 50%, transparent 50%) 0 7px / 4px 1px repeat-x;
}
.twig:not(.open) {
  width: 22px;
  margin-left: 7px;
}
.twig.open::before {
  position: absolute;
  top: 0;
  left: 0;
  width: 15px;
  height: 15px;
  border: 1px solid #919191;
  border-radius: 2px;
  background:
    linear-gradient(#2c4fa0, #2c4fa0) center / 9px 1px no-repeat,
    linear-gradient(#2c4fa0, #2c4fa0) center / 1px 9px no-repeat,
    #fafafa;
  content: '';
}

/* Charts behind the dialog */
.center {
  display: flex;
  flex: 1;
  flex-direction: column;
  min-width: 0;
  padding: 0 12px;
  border-top: 3px solid #6b6b6b;
  border-left: 3px solid #6b6b6b;
  background: #f0f0f0;
}
.center-head {
  flex: 0 0 12px;
  margin: 0 -12px;
  background: #e0f1ff;
}
.canvas {
  display: block;
  flex: 1;
  width: 100%;
  height: 100%;
  min-height: 0;
  background: #000;
}
.canvas text {
  fill: #fff;
  font-size: 15px;
}
.side .canvas text {
  font-size: 16px;
}
.grid {
  fill: none;
  stroke: #6f7f93;
  stroke-width: 2px;
  stroke-dasharray: 5 5;
}
.grid.tight {
  stroke-dasharray: 3 3;
}
.candle path,
.candle rect {
  fill: #000;
  stroke: #0f0;
  stroke-width: 2px;
}
.candle rect.filled {
  fill: #fff;
}
.ma {
  fill: none;
  stroke: #e00000;
  stroke-width: 2px;
  stroke-dasharray: 7 4;
}
.dash {
  fill: none;
  stroke-width: 2px;
  stroke-dasharray: 6 5;
}
.side {
  display: flex;
  flex: 0 0 357px;
  flex-direction: column;
  min-width: 0;
  border-top: 4px solid #6b6b6b;
  border-left: 3px solid #6b6b6b;
}
.pair {
  display: flex;
  flex: 0 0 482px;
  flex-direction: column;
  padding: 0 0 12px 10px;
}
.pair.gbp {
  flex: 1;
  min-height: 0;
  padding-bottom: 0;
  border-top: 3px solid #6b6b6b;
}
.pair-head {
  flex: 0 0 47px;
}
.pair-body {
  position: relative;
  flex: 1;
  min-height: 0;
  overflow: hidden;
  border-top: 3px solid #6b6b6b;
  border-left: 1px solid #6b6b6b;
  background: #000;
}
.oneclick {
  position: absolute;
  top: 39px;
  left: 10px;
  display: grid;
  grid-template-rows: 37px 58px;
  grid-template-columns: 73px 78px 77px 73px;
  column-gap: 3px;
  background: #000;
}
.side-tab {
  position: relative;
  border: 1px solid #0000a8;
  border-bottom: 0;
  background: linear-gradient(#4c4cff, #2f2fe0);
  color: #dcd8ff;
}
.side-tab::after {
  position: absolute;
  right: 5px;
  bottom: 0;
  left: 5px;
  height: 3px;
  border-bottom: 1px solid #8f8fff;
  background: #0000a8;
  content: '';
}
.side-tab.red {
  border-color: #a80000;
  background: linear-gradient(#ff4c4c, #dd2c2c);
  color: #ffdcdc;
}
.side-tab.red::after {
  border-color: #ff8f8f;
  background: #a80000;
}
.lot {
  display: flex;
  grid-column: 2 / 4;
  height: 33px;
  background: #fff;
}
.lot input {
  flex: 1;
  width: 0;
  padding-right: 7px;
  color: #333;
  text-align: right;
}
.lot button {
  display: flex;
  flex: 0 0 33px;
  align-items: center;
  justify-content: center;
  border: 2px solid #bdbdbd;
  background: #ececec;
}
.up,
.down {
  border: 4px solid transparent;
}
.up {
  border-top: 0;
  border-bottom: 5px solid currentColor;
}
.down {
  border-top: 5px solid currentColor;
  border-bottom: 0;
}
.deal {
  display: flex;
  grid-column: 1 / 3;
  justify-content: flex-end;
  height: 58px;
  padding: 0 13px 0 0;
  border: 1px solid #0000a8;
  border-top: 0;
  background: linear-gradient(#2f2fdc, #0000b4);
  color: #fff;
}
.deal + .deal {
  grid-column: 3 / 5;
}
.deal.red {
  border-color: #a80000;
  background: linear-gradient(#dd2c2c, #b20000);
}
.deal small {
  margin-top: 30px;
  font-size: 17px;
  font-weight: 500;
}
.deal b {
  margin: 0 8px;
  font-family: 'Open Sans', 'Noto Sans', sans-serif;
  font-size: 48px;
  font-weight: 400;
  line-height: 60px;
}
.deal sup {
  margin-top: 8px;
  font-size: 17px;
  font-weight: 500;
}

/* Order dialog */
.dialog {
  position: absolute;
  top: 203px;
  right: 220px;
  left: 301px;
  border: 1px solid #2a2a2a;
  background: #f0f0f0;
}
.dialog-head {
  display: flex;
  align-items: center;
  height: 54px;
  padding: 0 32px 3px 15px;
  background: #fff;
}
.dialog-head h1 {
  flex: 1;
  color: #999;
  font-size: 17px;
}
.dialog-head button {
  display: flex;
  margin-left: 62px;
}
.dialog-body {
  display: flex;
  gap: 44px;
  padding: 18px 46px 30px 15px;
}
.ticks {
  flex: 0 0 551px;
  height: 597px;
  border: 2px solid #e3e3e3;
  border-top: 3px solid #6f6f6f;
  border-left: 3px solid #6f6f6f;
  background: #fff;
}
.tick-chart {
  display: block;
  width: 100%;
  height: 588px;
  margin: 4px 0 0 -2px;
}
.tick-chart text {
  font-size: 16px;
}
.faint {
  stroke: #e1e1e1;
  stroke-width: 2px;
  stroke-dasharray: 6 5;
}
.price {
  fill: none;
  stroke-width: 2px;
  shape-rendering: crispEdges;
}
.order {
  display: flex;
  flex: 1;
  flex-direction: column;
}
.row {
  display: flex;
  align-items: center;
  height: 36px;
  margin-bottom: 14px;
}
.row.tall {
  height: 38px;
}
.row.apart {
  height: 36px;
  margin-top: 33px;
}
.row > label {
  flex: 0 0 146px;
  margin-right: 14px;
  font-size: 19px;
  text-align: right;
  white-space: nowrap;
}
.row > label.second {
  flex: 1;
}
.row > .jp,
.jp {
  font-size: 22px;
}
.mixed {
  font-size: 20px;
}
.select {
  position: relative;
  flex: 0 0 176px;
  height: 100%;
  border: 2px solid #adadad;
  background: #e1e1e1;
}
.select.wide {
  flex: 1;
}
.select.white {
  border-color: #7a7a7a;
  background: #fff;
}
.select.wide.white {
  border-color: #4a4a4a;
}
.select select {
  width: 100%;
  height: 100%;
  padding: 0 0 0 3px;
  appearance: none;
  opacity: 1;
}
.select svg {
  position: absolute;
  top: 50%;
  right: 7px;
  margin-top: -4px;
  fill: none;
  stroke: #555;
  stroke-width: 2px;
  pointer-events: none;
}
.select.dim {
  color: #888;
}
.select.dim svg {
  stroke: #bbb;
}
.spin {
  display: flex;
  flex: 0 0 176px;
  gap: 3px;
  height: 100%;
  padding-right: 2px;
}
.spin input {
  flex: 1;
  width: 0;
  padding: 0 8px 0 0;
  border: 2px solid #7a7a7a;
  background: #fff;
  font-size: 19px;
  text-align: right;
}
.spin > span {
  display: flex;
  flex: 0 0 26px;
  flex-direction: column;
  margin: 2px 0;
  background: #adadad;
  gap: 1px;
}
.spin span button {
  display: flex;
  flex: 1;
  align-items: center;
  justify-content: center;
  border: 1px solid #adadad;
  background: #f0f0f0;
}
.spin.off input {
  border-color: #c4c4c4;
  background: #f0f0f0;
  color: #888;
}
.spin.off > span {
  background: #cfcfcf;
}
.spin.off button {
  border-color: #cfcfcf;
  color: #888;
}
.marked {
  position: relative;
}
.highlight {
  position: absolute;
  z-index: 1;
  top: -22px;
  left: 70px;
  width: 290px;
  height: 81px;
  border: 20px solid #ffb9ba;
  pointer-events: none;
}
.comment {
  flex: 1;
  height: 100%;
  padding: 0 6px;
  border: 2px solid #7a7a7a;
  background: #fff;
}
.quote {
  margin-top: 8px;
  padding-right: 8px;
  font-size: 46px;
  line-height: 60px;
  text-align: center;
  white-space: nowrap;
}
.quote small {
  margin-left: 3px;
  font-size: 36px;
}
.submit {
  height: 38px;
  margin: 29px 0 0;
  border: 2px solid #adadad;
  border-radius: 3px;
  color: #777;
  font-size: 20px;
}
</style>
